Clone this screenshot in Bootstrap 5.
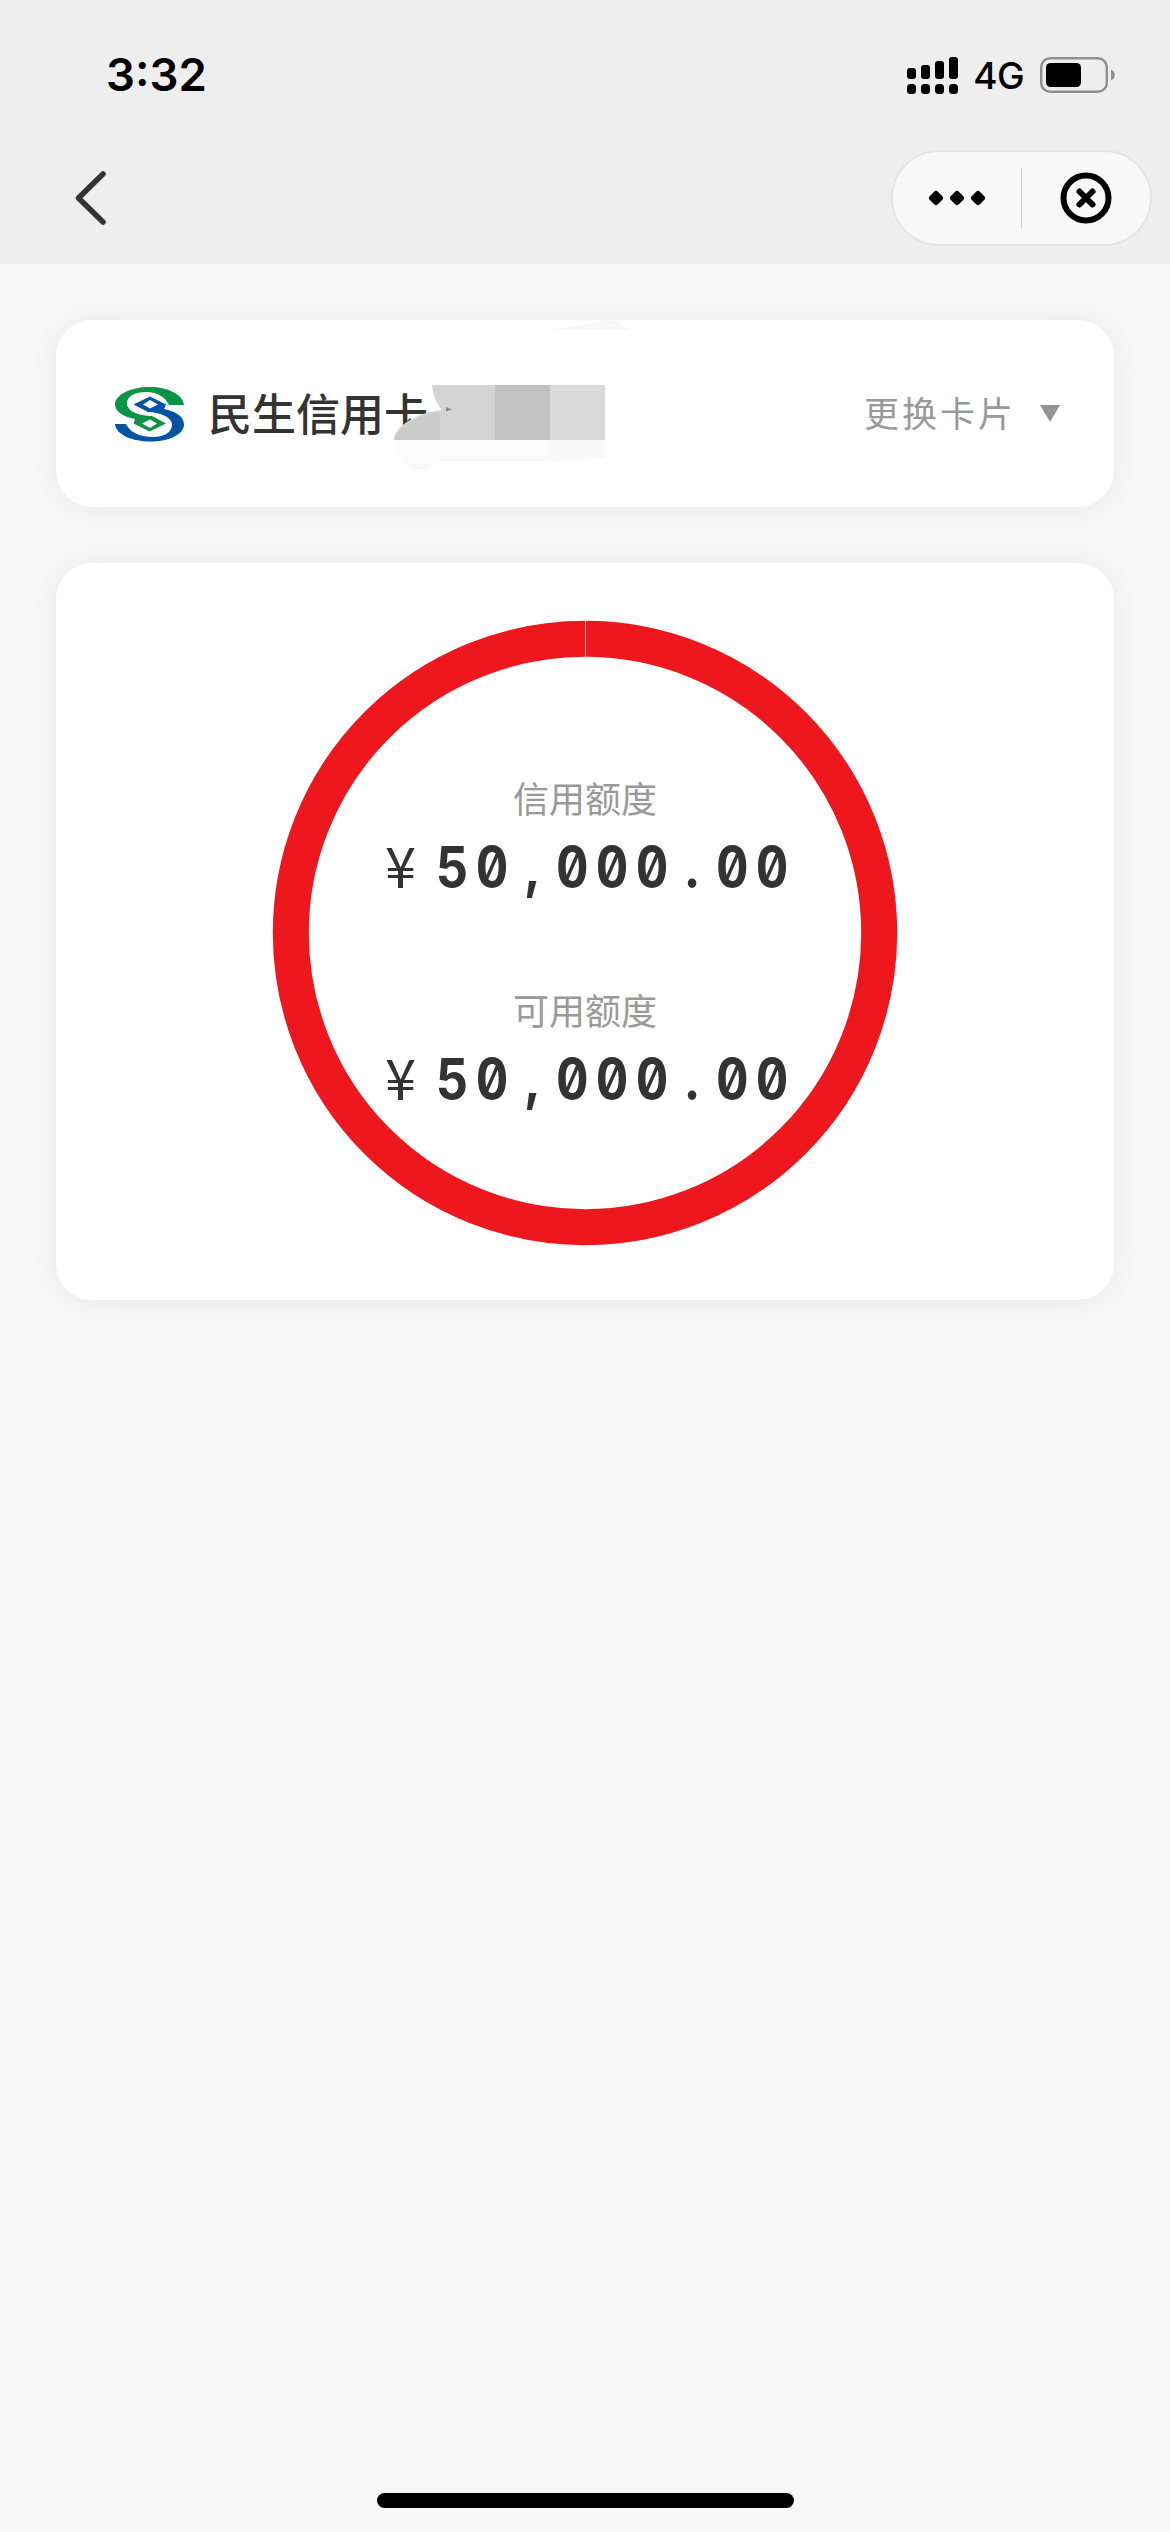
<!DOCTYPE html>
<html lang="zh-CN">
<head>
<meta charset="utf-8">
<meta name="viewport" content="width=device-width, initial-scale=1">
<title>信用额度</title>
<link href="https://cdn.jsdelivr.net/npm/bootstrap@5.3.0/dist/css/bootstrap.min.css" rel="stylesheet">
<style>
body{background:#f7f7f7;font-family:Inter,"Noto Sans CJK SC",sans-serif;color:#333;height:2532px;overflow:hidden}
svg{display:block;flex:none}
.app-head{background:#eee;height:264px}
.status-line{height:148px;padding:1px 54px 0 106px;color:#000}
.clock{font-size:45.500px;font-weight:600;line-height:56px}
.net-label{font-size:37px;font-weight:500;line-height:44px;letter-spacing:-.6px;margin-left:14px;padding-top:2px}
.nav-line{height:100px;padding:0 18px 0 75px}
.capsule{width:261px;height:96px;border:2px solid #e4e4e4;background:#f8f8f8}
.cap-half{width:128px}
.cap-rule{width:1px;height:60px;background:#c8c8c8}
.panel{border:0;border-radius:36px;box-shadow:0 1px 30px rgba(0,0,0,.06)}
.panels{padding:56px 56px 0;gap:56px}
.bank-panel{height:187px;padding:0 54px 0 59px}
.bank-name{font-family:"Noto Sans CJK SC",sans-serif;font-size:44px;font-weight:500;line-height:64px;margin-left:23px;padding-bottom:4px}
.swap{font-family:"Noto Sans CJK SC",sans-serif;font-size:35px;font-weight:400;line-height:52px;letter-spacing:3px;color:#999;padding-bottom:4px}
.mosaic{position:absolute;left:338px;top:0}
.limit-panel{height:737px;padding-top:56.500px}
.ring{width:626px;height:626px}
.ring-text{position:absolute;inset:0;padding-top:150px}
.limit-label{font-family:"Noto Sans CJK SC",sans-serif;font-size:36px;font-weight:400;line-height:54px;color:#999}
.limit-sum{height:82px;line-height:82px;width:410px;margin-left:10px}
.limit-sum + .limit-label{margin-top:76px}
.yen{flex:none;font-family:"Noto Sans CJK SC",sans-serif;font-size:56px;font-weight:400;width:51px;line-height:79px}
.digits{flex:none;font-size:56px;font-weight:650;line-height:87px;white-space:nowrap;font-feature-settings:"tnum","zero";letter-spacing:8px;transform:scaleX(.9);transform-origin:0 50%}
.digits i{display:inline-block;width:45px;text-align:center;font-style:normal;letter-spacing:0;padding-right:8px}
.home-bar{width:417px;height:15px;margin-bottom:24px}
</style>
<script src="https://cdn.jsdelivr.net/npm/bootstrap@5.3.0/dist/js/bootstrap.bundle.min.js"></script>
</head>
<body class="d-flex flex-column">
<header class="app-head">
  <div class="status-line d-flex align-items-center justify-content-between">
    <span class="clock">3:32</span>
    <div class="d-flex align-items-center">
      <svg width="52" height="38" viewBox="0 0 52 38"><rect x="0" y="12" width="9" height="11" rx="3"/><rect x="14" y="9" width="9" height="14" rx="3"/><rect x="28" y="5" width="9" height="18" rx="3"/><rect x="42" y="1" width="9" height="22" rx="3"/><rect x="0" y="28" width="9" height="10" rx="3.5"/><rect x="14" y="28" width="9" height="10" rx="3.5"/><rect x="28" y="28" width="9" height="10" rx="3.5"/><rect x="42" y="28" width="9" height="10" rx="3.5"/></svg>
      <span class="net-label">4G</span>
      <svg class="ms-3" width="76" height="36" viewBox="0 0 76 36"><rect x="1.2" y="1.2" width="65.6" height="33.6" rx="9" fill="none" stroke="#8f8f8f" stroke-width="2.4"/><rect x="6" y="6" width="35" height="24" rx="4.5"/><path d="M71 12.5c5 2 5 9 0 11z" fill="#8f8f8f"/></svg>
    </div>
  </div>
  <nav class="nav-line d-flex align-items-center justify-content-between">
    <svg width="32" height="56" viewBox="0 0 32 56"><path d="M28 4L3.500 28 28 52" fill="none" stroke="#333" stroke-width="5.500" stroke-linecap="round" stroke-linejoin="round"/></svg>
    <div class="capsule rounded-pill d-flex align-items-center">
      <div class="cap-half d-flex justify-content-center"><svg width="58" height="16" viewBox="0 0 58 16"><g stroke="#000" stroke-width="6" stroke-linejoin="round"><path d="M8 4L12 8 8 12 4 8z"/><path d="M29 4L33 8 29 12 25 8z"/><path d="M50 4L54 8 50 12 46 8z"/></g></svg></div>
      <span class="cap-rule"></span>
      <div class="cap-half d-flex justify-content-center"><svg width="52" height="52" viewBox="0 0 52 52" fill="none" stroke="#000" stroke-width="6"><circle cx="26" cy="26" r="22.500"/><path d="M19.500 19.500l13 13m0-13l-13 13" stroke-linecap="round"/></svg></div>
    </div>
  </nav>
</header>
<main class="panels d-flex flex-column flex-fill">
  <section class="card panel bank-panel flex-row align-items-center">
    <svg width="70" height="56" viewBox="0 0 70 56"><path d="M69 19C68 8 52 1 35 1C15 1 0 9 0 18.500C0 26 9 31 20 33L18.500 37.500 34.500 45.500 51 37.500 37 30C26 30 12 26 12 17.500C12 10 20 6 31 6C43 6 51 12 54 19z" fill="#0b9444"/><path d="M0 38C1 49 18 55.500 35 55.500C55 55.500 69 48 69 38.500C69 30 60 25.500 49 23L51 18.500 35 10.500 18.500 18.500 33 26C44 26 57 31 57 38.500C57 46 50 51 38 51C24 51 15 46 11 38z" fill="#0054a6"/><path d="M35 14l8 4.500-8 4-7-4zM35 33.500l-8 4 8 4.500 7-4.500z" fill="#fff"/></svg>
    <span class="bank-name">民生信用卡</span>
    <svg class="mosaic" width="240" height="150" viewBox="0 0 240 150"><path d="M0 120C0 108 20 93 48 90Q39 80 38 65H211V120z" fill="#d4d4d4"/><path d="M0 120C3 108 22 96 46 92V120z" fill="#cbcbcb"/><path d="M101 65h55v55h-55z" fill="#c2c2c2"/><path d="M156 65h55v55h-55z" fill="#dadada"/><path d="M52 87l6 2.500-6 2z" fill="#888"/><path d="M1 120h210v16q-5 5-55 6H46q-8 9-24 9Q1 146 1 120z" fill="#fbfbfb"/><path d="M156 120h55v18l-55 4z" fill="#f9f9f9"/><path d="M158 10Q178 5 196 4Q218-7 236 10z" fill="#f8f8f8"/></svg>
    <span class="swap ms-auto">更换卡片</span>
    <svg class="ms-4" width="20" height="17" viewBox="0 0 20 17"><path d="M0 0h20L10 17z" fill="#949494"/></svg>
  </section>
  <section class="card panel limit-panel align-items-center">
    <div class="position-relative">
      <svg class="ring" viewBox="0 0 626 626"><circle cx="313" cy="313" r="294.200" fill="none" stroke="#ee171d" stroke-width="36"/><path d="M313.500 1v36" stroke="#e8c4c4" stroke-width="1"/></svg>
      <div class="ring-text d-flex flex-column align-items-center">
        <div class="limit-label">信用额度</div>
        <div class="limit-sum d-flex"><span class="yen">¥</span><span class="digits">50<i>,</i>000<i>.</i>00</span></div>
        <div class="limit-label">可用额度</div>
        <div class="limit-sum d-flex"><span class="yen">¥</span><span class="digits">50<i>,</i>000<i>.</i>00</span></div>
      </div>
    </div>
  </section>
</main>
<footer class="d-flex justify-content-center"><div class="home-bar bg-black rounded-pill"></div></footer>
</body>
</html>
